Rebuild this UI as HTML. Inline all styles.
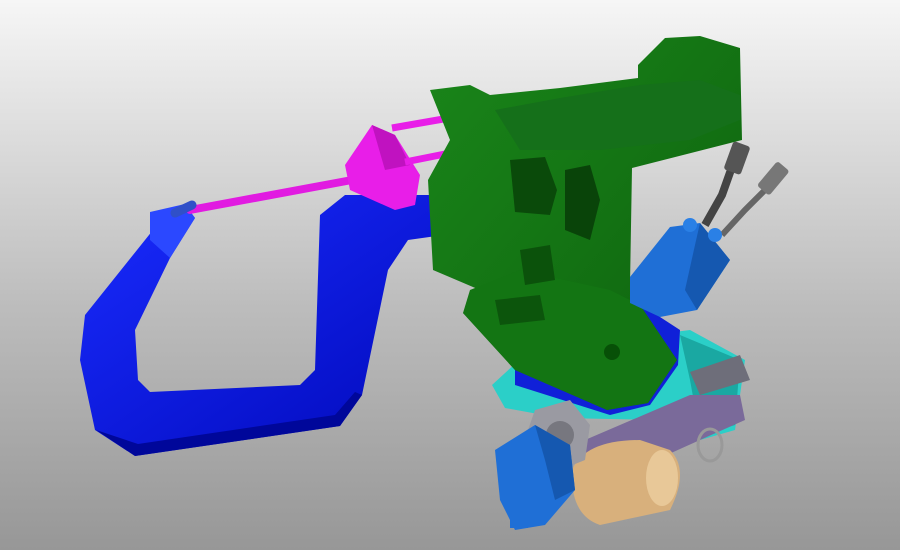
<!DOCTYPE html>
<html><head><meta charset="utf-8"><style>
html,body{margin:0;padding:0;width:900px;height:550px;overflow:hidden}
body{background:linear-gradient(#f6f6f6,#bdbdbd 55%,#979797)}
svg{display:block}
</style></head><body>
<svg width="900" height="550" viewBox="0 0 900 550" xmlns="http://www.w3.org/2000/svg">
<defs>
<linearGradient id="bl" x1="0" y1="0" x2="1" y2="1"><stop offset="0" stop-color="#1a2cff"/><stop offset="1" stop-color="#0008b8"/></linearGradient>
<linearGradient id="gr" x1="0" y1="0" x2="1" y2="1"><stop offset="0" stop-color="#1a861a"/><stop offset="1" stop-color="#0d600d"/></linearGradient>
</defs>
<!-- cables -->
<path d="M738,150 L722,195 L705,225" stroke="#444" stroke-width="8" fill="none"/>
<rect x="728" y="143" width="18" height="30" rx="3" fill="#555" transform="rotate(20 737 158)"/>
<path d="M775,180 L745,210 L722,235" stroke="#666" stroke-width="6" fill="none"/>
<rect x="765" y="163" width="16" height="32" rx="3" fill="#777" transform="rotate(40 774 179)"/>
<!-- cyan parts -->
<polygon points="492,385 530,350 690,330 745,360 735,430 700,440 660,420 560,418 505,408" fill="#2bcfc8"/>
<polygon points="680,335 740,360 735,425 700,435 690,380" fill="#1aa8a2"/>
<!-- C clamp -->
<path d="M185,205 L165,215 L85,315 L80,360 L95,430 L135,456 L340,426 L362,395 L388,270 L408,240 L465,232 L465,195 L345,195 L320,215 L315,370 L300,385 L150,392 L138,380 L135,330 L170,258 L195,218 Z" fill="url(#bl)"/>
<path d="M96,430 L135,456 L340,426 L362,395 L355,392 L335,415 L138,444 Z" fill="#00079a"/>
<polygon points="150,212 185,204 195,218 170,258 150,240" fill="#2b48ff"/>
<!-- magenta -->
<path d="M190,210 L352,180" stroke="#e11be1" stroke-width="8" stroke-linecap="round"/>
<path d="M175,213 L192,205" stroke="#3050c8" stroke-width="9" stroke-linecap="round"/>
<polygon points="345,165 372,125 395,135 420,175 415,205 395,210 350,190" fill="#e81ee8"/>
<polygon points="372,125 395,135 410,165 385,170" fill="#c012c0"/>
<path d="M392,128 L455,117" stroke="#e81ee8" stroke-width="7"/>
<path d="M405,162 L455,152" stroke="#e81ee8" stroke-width="7"/>
<!-- blue under green -->
<polygon points="515,365 640,300 660,317 680,330 678,365 650,405 610,415 515,385" fill="#1020d8"/>
<!-- green body -->
<polygon points="430,90 470,85 490,95 560,88 638,78 638,65 665,38 700,36 740,48 742,140 632,168 630,285 640,305 677,360 648,403 607,410 515,370 463,313 480,290 433,270 428,180 450,140" fill="url(#gr)"/>
<polygon points="470,290 520,270 610,290 640,305 677,360 648,403 607,410 515,370 463,313" fill="#137513"/>
<polygon points="495,110 560,98 640,85 700,80 740,95 740,120 690,140 600,150 520,150" fill="#15701a"/>
<polygon points="510,160 545,157 557,190 550,215 515,212" fill="#0a4a0a"/>
<polygon points="565,170 590,165 600,200 590,240 565,230" fill="#094409"/>
<polygon points="520,250 550,245 555,280 525,285" fill="#0b520b"/>
<polygon points="495,300 540,295 545,320 500,325" fill="#0c550c"/>
<circle cx="612" cy="352" r="8" fill="#075007"/>
<!-- blue motor right -->
<polygon points="630,277 670,227 700,223 730,260 697,310 660,317 630,303" fill="#1f6fd6"/>
<polygon points="700,223 730,260 697,310 685,290 695,245" fill="#1558b0"/>
<circle cx="690" cy="225" r="7" fill="#2a80e6"/><circle cx="715" cy="235" r="7" fill="#2a80e6"/>
<!-- purple cylinder -->
<polygon points="585,440 690,395 740,395 745,420 700,440 600,485 580,470" fill="#7a6a9a"/>
<polygon points="690,372 740,355 750,380 700,395" fill="#6e6e7a"/>
<!-- tan cylinder -->
<path d="M572,470 Q585,440 640,440 L670,450 Q690,470 670,510 L600,525 Q570,515 572,470 Z" fill="#d8b07c"/>
<ellipse cx="662" cy="478" rx="16" ry="28" fill="#e8c898"/>
<!-- gray gear -->
<polygon points="535,410 570,400 590,425 585,460 560,470 535,455 528,430" fill="#9a9aa2"/>
<circle cx="560" cy="435" r="14" fill="#77777f"/>
<!-- blue bottom -->
<polygon points="495,450 535,425 570,445 575,490 545,525 515,530 500,500" fill="#1f6fd6"/>
<polygon points="535,425 570,445 575,490 555,500 545,460" fill="#1558b0"/>
<rect x="510" y="510" width="18" height="18" fill="#1f6fd6"/>
<!-- ring -->
<ellipse cx="710" cy="445" rx="12" ry="16" fill="none" stroke="#999" stroke-width="3"/>
</svg>
</body></html>
